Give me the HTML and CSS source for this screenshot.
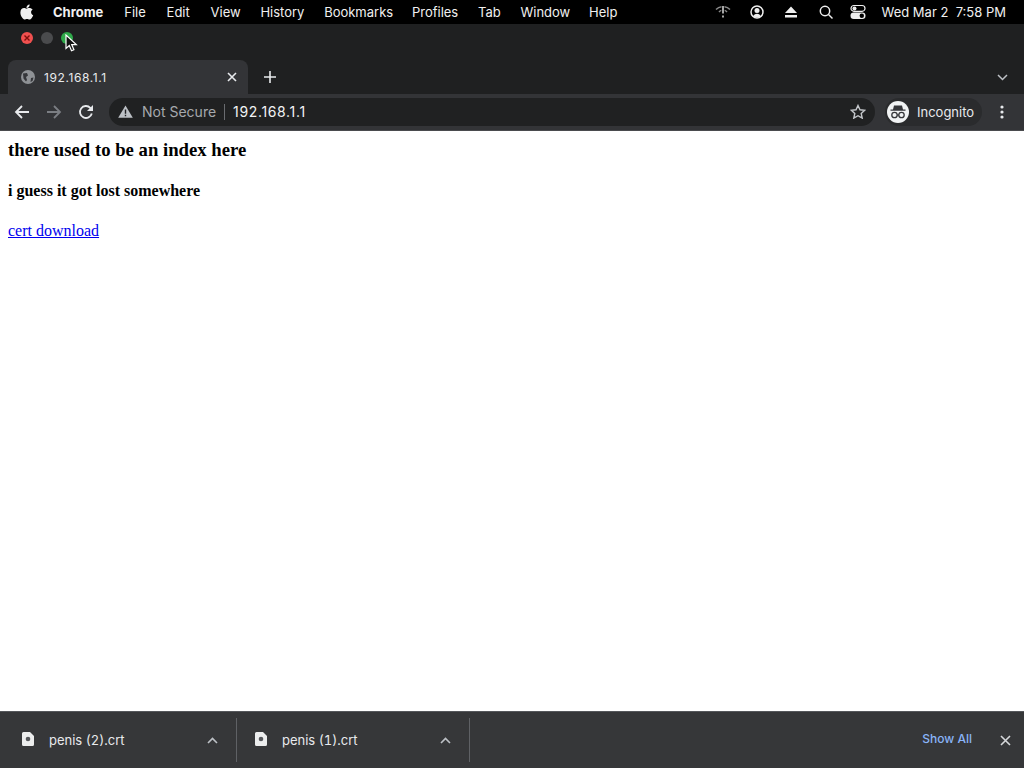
FILE: index.html
```html
<!DOCTYPE html>
<html>
<head>
    <title>192.168.1.1</title>
    <link rel="stylesheet" href="styles.css">
</head>
<body>
    <div class="menubar">
        <svg class="apple" width="14" height="16" viewBox="0 0 14 16"><path fill="#eee" d="M9.6 0.4c0.1 1-0.3 1.9-0.8 2.5-0.6 0.7-1.4 1.2-2.3 1.1-0.1-0.9 0.3-1.9 0.9-2.5 0.5-0.6 1.5-1.1 2.2-1.1zM12.7 5.6c-1 0.6-1.6 1.5-1.6 2.7 0 1.4 0.8 2.4 2.1 2.9-0.3 0.9-0.7 1.7-1.3 2.5-0.7 1-1.4 1.8-2.4 1.8-1 0-1.3-0.6-2.5-0.6-1.2 0-1.6 0.6-2.5 0.6-1 0-1.7-0.9-2.4-1.9C1.1 12.2 0.4 10.2 0.4 8.400c0-2.800 1.800-4.300 3.600-4.300 1 0 1.800 0.600 2.400 0.600 0.600 0 1.500-0.700 2.700-0.700 1.500 0 2.800 0.700 3.600 1.600z"/></svg>
        <span class="menu-item app-name">Chrome</span>
        <span class="menu-item wide">File</span>
        <span class="menu-item wide">Edit</span>
        <span class="menu-item">View</span>
        <span class="menu-item">History</span>
        <span class="menu-item tight">Bookmarks</span>
        <span class="menu-item">Profiles</span>
        <span class="menu-item">Tab</span>
        <span class="menu-item tight">Window</span>
        <span class="menu-item">Help</span>
        <div class="status-icons">
            <svg width="16" height="16" viewBox="0 0 16 16" fill="none" stroke="#8a8a8a" stroke-width="1.500"><path d="M1 5.500Q3.500 3 6.500 2.700M9.500 2.700Q12.500 3 15 5.500M4 8Q5 6.800 6.300 6.400M9.700 6.400Q11 6.800 12 8"/><path stroke="#ddd" d="M8 2v7.500M8 11.500v2"/></svg>
            <svg width="16" height="16" viewBox="0 0 16 16"><circle cx="8" cy="8" r="6" fill="none" stroke="#eee" stroke-width="1.500"/><circle cx="8" cy="6.500" r="2.500" fill="#eee"/><path fill="#eee" d="M3.800 12.200Q8 7.500 12.200 12.200Q8 15 3.800 12.200z"/></svg>
            <svg width="16" height="14" viewBox="0 0 16 14"><path fill="#eee" d="M8 1.500L14 8H2zM2 10h12v2.500H2z"/></svg>
            <svg class="search-icon" width="16" height="16" viewBox="0 0 16 16" fill="none" stroke="#eee" stroke-width="1.500"><circle cx="7" cy="7" r="4.700"/><path d="M10.500 10.500L14.500 14.500"/></svg>
            <svg class="toggle-icon" width="16" height="16" viewBox="0 0 16 16"><rect x="1" y="1.500" width="14" height="5.800" rx="2.900" fill="none" stroke="#eee" stroke-width="1.200"/><circle cx="4.500" cy="4.400" r="2" fill="#eee"/><rect x="0.500" y="8.500" width="15" height="6.500" rx="3.250" fill="#eee"/><circle cx="11.800" cy="11.750" r="2.200" fill="#000"/></svg>
        </div>
        <span class="clock">Wed Mar 2&nbsp; 7:58 PM</span>
    </div>

    <div class="titlebar">
        <span class="light red">
            <svg width="8" height="8" viewBox="0 0 8 8"><path stroke="#7d0f0c" stroke-width="1.400" d="M1.500 1.500l5 5M6.500 1.500l-5 5"/></svg>
        </span>
        <span class="light grey"></span>
        <span class="light green"></span>
    </div>

    <div class="tabstrip">
        <div class="tab">
            <svg width="14" height="14" viewBox="0 0 14 14"><circle cx="7" cy="7" r="7" fill="#8f9296"/><path fill="#35363a" d="M2 3.500L6 3l1 2.500-2 1.500 1 3-1 1.500-2.500-3zM10 8l2.500-0.500-1 3.500-2 1z"/></svg>
            <span class="tab-title">192.168.1.1</span>
            <svg class="tab-close" width="10" height="10" viewBox="0 0 10 10"><path stroke="#e8eaed" stroke-width="1.600" d="M1 1l8 8M9 1l-8 8"/></svg>
        </div>
        <svg class="new-tab" width="12" height="12" viewBox="0 0 12 12"><path stroke="#e8eaed" stroke-width="1.600" d="M6 0v12M0 6h12"/></svg>
        <svg class="tab-list" width="11" height="7" viewBox="0 0 11 7" fill="none"><path stroke="#bdc1c6" stroke-width="1.500" d="M1 1l4.500 4.500L10 1"/></svg>
    </div>

    <div class="toolbar">
        <svg class="nav-btn" width="16" height="16" viewBox="0 0 16 16" fill="none" stroke="#e8eaed" stroke-width="1.800"><path d="M15 8H2M8 2L2 8l6 6"/></svg>
        <svg class="nav-btn" width="16" height="16" viewBox="0 0 16 16" fill="none" stroke="#7b7e83" stroke-width="1.800"><path d="M1 8h13M8 2l6 6-6 6"/></svg>
        <svg class="nav-btn" width="16" height="16" viewBox="0 0 16 16" fill="none" stroke="#e8eaed" stroke-width="1.800"><path d="M13.800 9.500A6 6 0 1 1 12.300 3.800L14 5.500"/><path fill="#e8eaed" stroke="none" d="M15 1v6H9z"/></svg>
        <div class="omnibox">
            <svg width="15" height="13" viewBox="0 0 15 13"><path fill="#bdc1c6" d="M7.500 0.500L14.800 12.800H0.200z"/><path stroke="#202124" stroke-width="1.400" d="M7.500 4.500v4.300M7.500 9.800v1.500"/></svg>
            <span class="not-secure">Not Secure</span>
            <span class="omni-url">192.168.1.1</span>
            <svg class="star" width="16" height="15" viewBox="0 0 16 15" fill="none"><path stroke="#c4c7cb" stroke-width="1.400" d="M8 1.500l2 4.300 4.700 0.500-3.500 3.200 1 4.600L8 11.700l-4.200 2.400 1-4.600L1.300 6.300 6 5.800z"/></svg>
        </div>
        <div class="profile">
            <span class="avatar">
                <svg width="18" height="14" viewBox="0 0 18 14" fill="none"><path fill="#35363a" d="M5 0.500h8l1 4H4zM1.500 4.500h15v1.200h-15z"/><circle cx="5.500" cy="10" r="2.700" stroke="#35363a" stroke-width="1.300"/><circle cx="12.500" cy="10" r="2.700" stroke="#35363a" stroke-width="1.300"/><path stroke="#35363a" stroke-width="1.200" d="M8 10h2"/></svg>
            </span>
            <span class="profile-name">Incognito</span>
        </div>
        <svg class="more" width="4" height="14" viewBox="0 0 4 14"><circle cx="2" cy="2" r="1.600" fill="#e8eaed"/><circle cx="2" cy="7" r="1.600" fill="#e8eaed"/><circle cx="2" cy="12" r="1.600" fill="#e8eaed"/></svg>
    </div>

    <div class="page">
        <h3>there used to be an index here</h3>
        <h4>i guess it got lost somewhere</h4>
        <a href="#">cert download</a>
    </div>

    <div class="downloads">
        <div class="dl-item">
            <svg class="dl-icon" width="12" height="14" viewBox="0 0 12 14"><path fill="#eceded" d="M1.500 0H8l4 4v8.500a1.500 1.500 0 0 1-1.500 1.500h-9A1.500 1.500 0 0 1 0 12.500v-11A1.500 1.500 0 0 1 1.500 0z"/><circle cx="6" cy="7" r="2.300" fill="#54565a"/></svg>
            <span class="dl-name">penis (2).crt</span>
            <svg class="dl-caret" width="11" height="7" viewBox="0 0 11 7" fill="none"><path stroke="#bdc1c6" stroke-width="1.600" d="M1 6l4.500-4.500L10 6"/></svg>
        </div>
        <div class="dl-item">
            <svg class="dl-icon" width="12" height="14" viewBox="0 0 12 14"><path fill="#eceded" d="M1.500 0H8l4 4v8.500a1.500 1.500 0 0 1-1.500 1.500h-9A1.500 1.500 0 0 1 0 12.500v-11A1.500 1.500 0 0 1 1.500 0z"/><circle cx="6" cy="7" r="2.300" fill="#54565a"/></svg>
            <span class="dl-name">penis (1).crt</span>
            <svg class="dl-caret" width="11" height="7" viewBox="0 0 11 7" fill="none"><path stroke="#bdc1c6" stroke-width="1.600" d="M1 6l4.500-4.500L10 6"/></svg>
        </div>
        <span class="show-all">Show All</span>
        <svg class="dl-close" width="11" height="11" viewBox="0 0 11 11"><path stroke="#d5d7da" stroke-width="1.600" d="M1 1l9 9M10 1l-9 9"/></svg>
    </div>

    <svg class="cursor" width="14" height="19" viewBox="0 0 14 19"><path fill="#111" stroke="#fff" stroke-width="1.200" d="M1 1v13.500l3.300-3 2.200 5.200 2.400-1-2.200-5.100h4.600z"/></svg>
</body>
</html>
```

FILE: styles.css
```css
html, body {
    height: 100%;
}
body {
    margin: 0;
    height: 768px;
    width: 1024px;
    overflow: hidden;
    position: relative;
    display: flex;
    flex-direction: column;
    font-family: Inter, "Open Sans", sans-serif;
    background-color: #fff;
}

/* mac menu bar */
.menubar {
    height: 24px;
    flex: none;
    background-color: #000;
    color: #f0f0f0;
    display: flex;
    align-items: center;
    padding-left: 20px;
    font-size: 13px;
}
.apple {
    margin-right: 19px;
    margin-top: -1px;
}
.menu-item {
    margin-right: 19.75px;
}
.menu-item.wide {
    margin-right: 20.75px;
}
.menu-item.tight {
    margin-right: 18.75px;
}
.app-name {
    font-weight: 700;
    margin-right: 21px;
}
.status-icons {
    margin-left: auto;
    display: flex;
    align-items: center;
    gap: 18px;
}
.search-icon {
    margin-left: 1px;
}
.toggle-icon {
    margin-left: -2px;
}
.clock {
    margin-left: 16px;
    margin-right: 18px;
}

/* window buttons */
.titlebar {
    height: 36px;
    flex: none;
    background-color: #1f2021;
    display: flex;
    align-items: flex-start;
    gap: 8px;
    padding-left: 21px;
    padding-top: 8px;
    box-sizing: border-box;
}
.light {
    width: 12px;
    height: 12px;
    border-radius: 50%;
    display: flex;
    align-items: center;
    justify-content: center;
}
.red {
    background-color: #f0504f;
}
.grey {
    background-color: #4a4b4d;
}
.green {
    background-color: #2fa84a;
}

/* tabs */
.tabstrip {
    height: 34px;
    flex: none;
    background-color: #1f2021;
    display: flex;
    align-items: center;
    padding-left: 8px;
}
.tab {
    width: 240px;
    height: 34px;
    box-sizing: border-box;
    background-color: #333437;
    border-radius: 8px 8px 0 0;
    display: flex;
    align-items: center;
    padding: 0 11px 0 13px;
    color: #e8eaed;
    font-size: 12px;
}
.tab-title {
    margin-left: 9px;
    letter-spacing: 0.6px;
}
.tab-close {
    margin-left: auto;
}
.new-tab {
    margin-left: 16px;
}
.tab-list {
    margin-left: auto;
    margin-right: 16px;
}

/* address bar row */
.toolbar {
    height: 37px;
    flex: none;
    box-sizing: border-box;
    background-color: #333437;
    border-bottom: 1px solid #4a4b4e;
    display: flex;
    align-items: center;
    padding-left: 14px;
    padding-bottom: 1px;
}
.nav-btn {
    margin-right: 16px;
}
.omnibox {
    width: 766px;
    height: 28px;
    box-sizing: border-box;
    margin-left: -1px;
    background-color: #202122;
    border-radius: 14px;
    display: flex;
    align-items: center;
    padding: 0 9px;
    font-size: 14px;
}
.not-secure {
    color: #a6a9ad;
    margin-left: 9px;
    padding-right: 8px;
    border-right: 1px solid #6a6c70;
    line-height: 16px;
}
.omni-url {
    color: #f1f3f4;
    margin-left: 8px;
    letter-spacing: 0.65px;
}
.star {
    margin-left: auto;
}
.profile {
    margin-left: 10px;
    width: 97px;
    height: 28px;
    border-radius: 14px;
    background-color: #2a2b2d;
    display: flex;
    align-items: center;
    padding-left: 2px;
    box-sizing: border-box;
}
.avatar {
    width: 22px;
    height: 22px;
    border-radius: 50%;
    background-color: #f1f3f4;
    display: flex;
    align-items: center;
    justify-content: center;
}
.profile-name {
    color: #e8eaed;
    font-size: 13px;
    margin-left: 8px;
}
.more {
    margin-left: 18px;
}

/* page content */
.page {
    flex: 1;
    padding: 8px;
    font-family: "Liberation Serif", serif;
    color: #000;
}
h3 {
    font-size: 18.72px;
    margin: 0 0 21px;
}
h4 {
    font-size: 16px;
    margin: 0 0 22px;
}
.page a {
    font-size: 16px;
    color: #0000ee;
}

/* download shelf */
.downloads {
    height: 57px;
    flex: none;
    box-sizing: border-box;
    background-color: #363739;
    border-top: 1px solid #55575b;
    display: flex;
    align-items: center;
    color: #e8eaed;
    font-size: 13px;
}
.dl-item {
    width: 233px;
    height: 44px;
    box-sizing: border-box;
    border-right: 1px solid #5f6165;
    display: flex;
    align-items: center;
    padding-left: 18px;
    padding-right: 18px;
}
.dl-item:first-child {
    width: 237px;
    padding-left: 22px;
    padding-right: 18px;
}
.dl-icon {
    margin-top: -2px;
}
.dl-name {
    margin-left: 15px;
    font-variant-numeric: tabular-nums;
}
.dl-caret {
    margin-left: auto;
}
.show-all {
    margin-left: auto;
    color: #8ab4f8;
    font-size: 12px;
    font-weight: 500;
    margin-top: -3px;
}
.dl-close {
    margin-left: 28px;
    margin-right: 13px;
}

/* mouse pointer sits over the window buttons */
.cursor {
    position: absolute;
    left: 65px;
    top: 34px;
}
```
